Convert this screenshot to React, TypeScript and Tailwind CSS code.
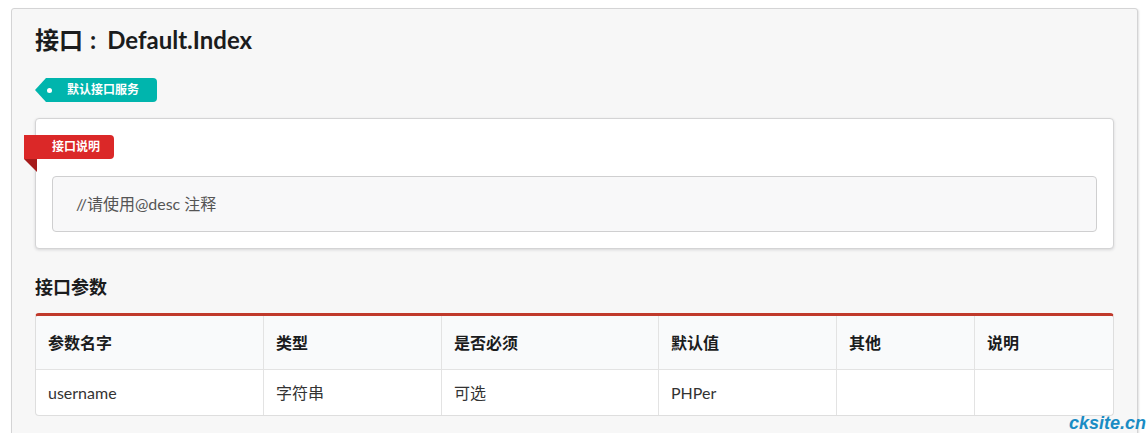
import React from "react";

const FONT = { fontFamily: 'Lato, "Noto Sans CJK SC", "Helvetica Neue", Arial, sans-serif' };

const cols = ["参数名字", "类型", "是否必须", "默认值", "其他", "说明"];
const row = ["username", "字符串", "可选", "PHPer", "", ""];

export default function App() {
  return (
    <div className="relative min-h-[433px] bg-white pl-[11px] pt-[8px] pr-[10px]" style={FONT}>
      <div className="w-[1127px] rounded-[3px] border border-[#d4d4d5] bg-[#f7f7f7] px-[23px] pt-[16px] pb-[24px] shadow-[1px_1px_2px_rgba(0,0,0,0.12)]">
        <h1 className="flex items-baseline text-[24px] font-bold leading-[30px] text-[#1b1c1d]">
          <span>接口</span>
          <span className="ml-[7px] mr-[11px]">:</span>
          <span>Default.Index</span>
        </h1>

        <div className="mt-[23px] flex h-[24px] items-center">
          <div className="h-0 w-0 border-y-[12px] border-r-[11px] border-y-transparent border-r-[#00b5ad]" />
          <div className="flex h-[24px] items-center rounded-r-[4px] bg-[#00b5ad] pr-[18px] text-[12px] font-bold text-white">
            <span className="ml-[1px] mr-[15px] h-[5px] w-[5px] rounded-full bg-white" />
            默认接口服务
          </div>
        </div>

        <div className="mt-[16px] rounded-[4px] border border-[#d4d4d5] bg-white p-4 shadow-[0_1px_3px_rgba(34,36,38,0.15)]">
          <div className="relative ml-[-28px] flex">
            <div className="flex h-[24px] items-center rounded-r-[4px] bg-[#db2828] pl-[28px] pr-[14px] text-[12px] font-bold text-white">
              接口说明
            </div>
            <div className="absolute left-0 top-full h-0 w-0 border-b-[13px] border-r-[13px] border-b-transparent border-r-[#a51b1b]" />
          </div>
          <div className="mt-[17px] rounded-[4px] border border-[#cfcfd0] bg-[#f8f8f9] px-[23px] py-[16px] text-[16px] leading-[22px] text-[#555]">
            //请使用@desc 注释
          </div>
        </div>

        <h2 className="mt-[26px] text-[18px] font-bold leading-[24px] text-[#1b1c1d]">接口参数</h2>

        <div className="mt-[14px] overflow-hidden rounded-[4px] border border-t-[3px] border-[#dedede] border-t-[#c0392b] bg-white">
          <div className="grid grid-cols-[228px_178px_217px_178px_138px_1fr] bg-[#f9fafb]">
            {cols.map((c, i) => (
              <div
                key={c}
                className={`flex h-[53px] items-center px-[12px] text-[16px] font-bold text-[#1b1c1d] ${i < 5 ? "border-r border-[#e3e3e3]" : ""}`}
              >
                {c}
              </div>
            ))}
          </div>
          <div className="grid grid-cols-[228px_178px_217px_178px_138px_1fr] border-t border-[#e3e3e3]">
            {row.map((c, i) => (
              <div
                key={i}
                className={`flex h-[45px] items-center px-[12px] text-[16px] text-[#333] ${i < 5 ? "border-r border-[#e3e3e3]" : ""}`}
              >
                {c}
              </div>
            ))}
          </div>
        </div>
      </div>

      <div
        className="absolute left-[1069px] top-[413px] whitespace-nowrap text-[18px] font-bold italic leading-[20px] text-[#1a8cc4]"
        style={{ fontFamily: '"Liberation Sans", Arial, sans-serif' }}
      >
        cksite.cn
      </div>
    </div>
  );
}
